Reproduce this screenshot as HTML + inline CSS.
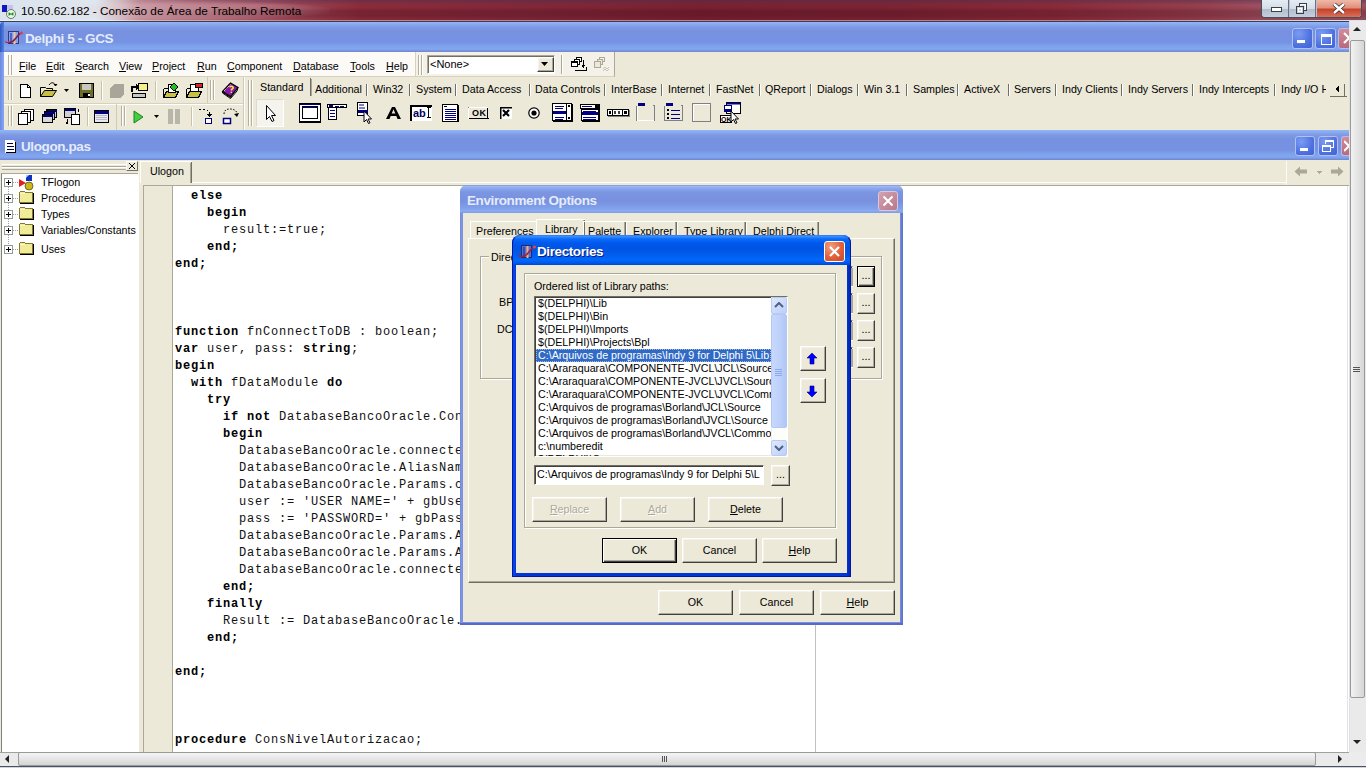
<!DOCTYPE html>
<html><head><meta charset="utf-8"><style>
*{margin:0;padding:0;box-sizing:border-box}
html,body{width:1366px;height:768px;overflow:hidden;background:#ece9d8;font-family:"Liberation Sans",sans-serif;font-size:10.7px;color:#000;position:relative}
.a{position:absolute}
.t{position:absolute;white-space:nowrap;line-height:13px}
.u{text-decoration:underline;text-underline-offset:1px}
.xpin{background:linear-gradient(180deg,#9bb3ef 0,#8aa4ea 2px,#7d97e1 5px,#7a94de 12px,#7f9ce3 20px,#8cabed 26px,#93b3f1 28px,#7b97dd 30px)}
.xpact{background:linear-gradient(180deg,#3c8cff 0,#0a5ef0 3px,#0058e6 8px,#0054e3 14px,#0060f0 22px,#0a66f8 25px,#0050d8 29px)}
.code{font-family:"Liberation Mono",monospace;font-size:12px;letter-spacing:0.8px;line-height:17px;white-space:pre;position:absolute;left:175px;color:#111}
.code b{font-weight:bold;color:#000}
.btn{background:#ece9d8;border:1px solid;border-color:#fff #404040 #404040 #fff;box-shadow:inset -1px -1px 0 #aca899,inset 1px 1px 0 #f4f2ea}
.btn.def{border:1px solid #000;box-shadow:inset 1px 1px 0 #fff,inset -1px -1px 0 #404040,inset -2px -2px 0 #aca899}
.bl{position:absolute;left:0;right:0;top:0;text-align:center;white-space:nowrap}
.sunk{background:#fff;border:1px solid;border-color:#aca899 #fff #fff #aca899;box-shadow:inset 1px 1px 0 #716f64,inset -1px -1px 0 #ece9d8}
.grp{border:1px solid #d0d0bf;box-shadow:inset 1px 1px 0 #fff,1px 1px 0 #fff}
.ttl{position:absolute;white-space:nowrap;font-weight:bold;font-size:13.5px;letter-spacing:-0.4px;line-height:17px}
.sep{position:absolute;width:2px;border-left:1px solid #aca899;border-right:1px solid #fff}
.grip{position:absolute;width:5px;border-left:1px solid #fff;border-right:1px solid #aca899;box-shadow:inset 1px 0 0 #aca899,inset -1px 0 0 #fff}
</style></head><body>
<div class="a " style="left:0px;top:0px;width:1366px;height:21px;background:linear-gradient(90deg,#dbe3ec 0,#dfe6ee 95px,#d8c4cb 118px,#c58e99 140px,#b7707e 190px,#aa5666 260px,#9a3f4f 310px,#8d2d3d 360px,#84293a 520px,#7a2232 700px,#7e2535 900px,#8a2b3b 1050px,#98404f 1200px,#a05060 1260px)"></div>
<div class="a " style="left:60px;top:1px;width:270px;height:19px;background:radial-gradient(ellipse at 50% 50%,rgba(235,205,210,.35) 0,rgba(230,200,205,.2) 55%,rgba(230,200,205,0) 75%)"></div>
<div class="a " style="left:100px;top:0px;width:1266px;height:20px;-webkit-mask-image:linear-gradient(90deg,transparent 0,#000 200px);mask-image:linear-gradient(90deg,transparent 0,#000 200px);background:linear-gradient(180deg,rgba(70,50,80,.45) 0,rgba(70,50,80,.3) 2px,rgba(120,30,50,0) 5px,rgba(40,0,10,.05) 8px,rgba(40,0,10,.22) 11px,rgba(40,0,10,.22) 16px,rgba(60,0,20,.1) 19px)"></div>
<div class="a " style="left:0px;top:20px;width:1366px;height:1px;background:linear-gradient(90deg,#e8f4fa 0,#e8f0f4 110px,#d8b0bc 150px,#c88090 300px,#c07888 1100px,#d0c0cc 1250px,#dde6f0 1366px)"></div>
<div class="a " style="left:0px;top:21px;width:1366px;height:1px;background:#3a4050"></div>
<svg class="a" style="left:0px;top:0px;shape-rendering:auto" width="20" height="20" viewBox="0 0 20 20" shape-rendering="crispEdges"><rect x="2" y="5" width="5" height="7" fill="#1018c0"/><rect x="7" y="5" width="6" height="4" fill="#c8c0f0"/><circle cx="11" cy="14" r="4.5" fill="#e8f8e0" stroke="#6a7a70" stroke-width="1"/><path d="M8.5 12.8 L10.3 14 L8.5 15.2 M13.5 12.8 L11.7 14 L13.5 15.2" stroke="#208a30" stroke-width="1.3" fill="none"/></svg>
<div class="t " style="left:21px;top:3px;font-size:11.75px;line-height:15px;color:#000">10.50.62.182 - Conexão de Área de Trabalho Remota</div>
<div class="a " style="left:1261px;top:0px;width:101px;height:18px;border:1px solid #4a4c58;border-top:none;border-radius:0 0 4px 4px;overflow:hidden;background:#b8c4d2"><div class="a" style="left:0;top:0;width:27px;height:17px;background:linear-gradient(180deg,#e6ecf3 0,#d4dde8 50%,#b0bccb 51%,#c4d0dc 100%);border-right:1px solid #6a7080"></div><div class="a" style="left:28px;top:0;width:26px;height:17px;background:linear-gradient(180deg,#e6ecf3 0,#d4dde8 50%,#b0bccb 51%,#c4d0dc 100%);border-right:1px solid #6a7080"></div><div class="a" style="left:55px;top:0;width:46px;height:17px;background:linear-gradient(180deg,#f0b8a8 0,#e0907c 45%,#c7432a 55%,#d8705a 100%)"></div></div>
<svg class="a" style="left:1270px;top:6px;" width="12" height="6" viewBox="0 0 12 6" shape-rendering="crispEdges"><rect x="1" y="1" width="10" height="4" fill="#fff" stroke="#3a3f4a"/></svg>
<svg class="a" style="left:1295px;top:2px;" width="12" height="12" viewBox="0 0 12 12" shape-rendering="crispEdges"><rect x="4" y="1" width="7" height="7" fill="none" stroke="#3a3f4a" stroke-width="1"/><rect x="5" y="2" width="5" height="5" fill="none" stroke="#fff"/><rect x="1" y="4" width="7" height="7" fill="#c8d2de" stroke="#3a3f4a"/><rect x="3" y="6" width="3" height="3" fill="none" stroke="#fff"/></svg>
<svg class="a" style="left:1332px;top:3px;shape-rendering:auto" width="14" height="11" viewBox="0 0 14 11" shape-rendering="crispEdges"><path d="M2 1 L12 10 M12 1 L2 10" stroke="#3a2a2a" stroke-width="4" fill="none"/><path d="M2 1 L12 10 M12 1 L2 10" stroke="#fff" stroke-width="2.4" fill="none"/></svg>
<div class="a " style="left:0px;top:22px;width:1349px;height:30px;background:linear-gradient(180deg,#92b6f8 0,#8aacf2 2px,#7f9ae2 5px,#7791e0 9px,#7692e2 20px,#7ea2ec 24px,#82a8f0 27px,#7890dc 29px,#6e84d4 30px)"></div>
<div class="a " style="left:0px;top:22px;width:4px;height:30px;background:linear-gradient(90deg,#2858c0,#5a80e0);border-radius:5px 0 0 0"></div>
<svg class="a" style="left:4px;top:28px;shape-rendering:auto" width="20" height="20" viewBox="0 0 20 20" shape-rendering="crispEdges"><rect x="4.5" y="3.5" width="10" height="12" fill="#8aa0e8" stroke="#303a80"/><path d="M7 5v9" stroke="#3050c0" stroke-width="1.5"/><path d="M10.5 4v12" stroke="#f0c8a0" stroke-width="2"/><path d="M1.5 13.5 C5 15.5 9 14 12 10 S16 5 18 4.5" stroke="#802040" stroke-width="1.6" fill="none"/><circle cx="17.5" cy="5" r="1.6" fill="#e04060"/><path d="M2 13 L4.5 14" stroke="#e070a0" stroke-width="1.2"/></svg>
<div class="t ttl" style="left:25px;top:30px;color:#e4ecfc">Delphi 5 - GCS</div>
<div class="a " style="left:1292px;top:28px;width:21px;height:21px;border:1px solid #b0c0f0;border-radius:3px;background:radial-gradient(circle at 30% 25%,#7a9cf4 0,#4f72e0 60%,#3f60d4 100%)"></div>
<div class="a " style="left:1315px;top:28px;width:21px;height:21px;border:1px solid #b0c0f0;border-radius:3px;background:radial-gradient(circle at 30% 25%,#7a9cf4 0,#4f72e0 60%,#3f60d4 100%)"></div>
<div class="a " style="left:1338px;top:28px;width:21px;height:21px;border:1px solid #b0bde8;border-radius:3px;background:linear-gradient(180deg,#d48a98,#b86a7c)"></div>
<svg class="a" style="left:1297px;top:40px;" width="10" height="4" viewBox="0 0 10 4" shape-rendering="crispEdges"><rect x="0" y="0" width="8" height="3" fill="#fff"/></svg>
<svg class="a" style="left:1319px;top:32px;" width="14" height="14" viewBox="0 0 14 14" shape-rendering="crispEdges"><rect x="2.5" y="2.5" width="10" height="10" fill="none" stroke="#fff" stroke-width="1.2"/><rect x="2" y="2" width="11" height="3" fill="#fff"/></svg>
<svg class="a" style="left:1342px;top:31px;shape-rendering:auto" width="8" height="15" viewBox="0 0 8 15" shape-rendering="crispEdges"><path d="M2 2 L12 12 M12 2 L2 12" stroke="#fff" stroke-width="2.2"/></svg>
<div class="a " style="left:0px;top:52px;width:4px;height:78px;background:linear-gradient(90deg,#6a88e0,#7898ec 2px,#88a8f0)"></div>
<div class="a " style="left:4px;top:52px;width:411px;height:25px;background:#fbfaf6;border-bottom:1px solid #d8d2bc"></div>
<div class="a " style="left:8px;top:55px;width:2px;height:20px;border-left:1px solid #b4b09c;border-right:1px solid #fff"></div>
<div class="a " style="left:11px;top:55px;width:2px;height:20px;border-left:1px solid #b4b09c;border-right:1px solid #fff"></div>
<div class="t " style="left:19px;top:60px;"><span class="u">F</span>ile</div>
<div class="t " style="left:46px;top:60px;"><span class="u">E</span>dit</div>
<div class="t " style="left:75px;top:60px;"><span class="u">S</span>earch</div>
<div class="t " style="left:119px;top:60px;"><span class="u">V</span>iew</div>
<div class="t " style="left:152px;top:60px;"><span class="u">P</span>roject</div>
<div class="t " style="left:197px;top:60px;"><span class="u">R</span>un</div>
<div class="t " style="left:227px;top:60px;"><span class="u">C</span>omponent</div>
<div class="t " style="left:293px;top:60px;"><span class="u">D</span>atabase</div>
<div class="t " style="left:350px;top:60px;"><span class="u">T</span>ools</div>
<div class="t " style="left:386px;top:60px;"><span class="u">H</span>elp</div>
<div class="a " style="left:415px;top:52px;width:200px;height:25px;background:#f3f1e8;border-left:1px solid #d8d2bc;border-bottom:1px solid #d8d2bc;border-right:1px solid #aca899"></div>
<div class="a " style="left:418px;top:55px;width:2px;height:20px;border-left:1px solid #b4b09c;border-right:1px solid #fff"></div>
<div class="a " style="left:421px;top:55px;width:2px;height:20px;border-left:1px solid #b4b09c;border-right:1px solid #fff"></div>
<div class="a " style="left:427px;top:55px;width:128px;height:19px;background:#fff;border:1px solid;border-color:#aca899 #fff #fff #aca899;box-shadow:inset 1px 1px 0 #716f64"></div>
<div class="t " style="left:430px;top:58px;font-size:11px">&lt;None&gt;</div>
<div class="a btn" style="left:537px;top:57px;width:17px;height:15px;"></div>
<svg class="a" style="left:541px;top:62px;shape-rendering:auto" width="9" height="5" viewBox="0 0 9 5" shape-rendering="crispEdges"><path d="M0 0h7l-3.5 4z" fill="#000"/></svg>
<div class="a " style="left:561px;top:55px;width:2px;height:19px;border-left:1px solid #aca899;border-right:1px solid #fff"></div>
<svg class="a" style="left:571px;top:57px;" width="16" height="16" viewBox="0 0 16 16" shape-rendering="crispEdges"><rect x="5.5" y="0.5" width="5" height="4" fill="#fff" stroke="#000"/><rect x="3.5" y="2.5" width="5" height="5" fill="#fff" stroke="#000"/><rect x="0.5" y="4.5" width="6" height="5" fill="#fff" stroke="#000"/><rect x="1" y="5" width="5" height="1" fill="#000"/><path d="M12.5 3v7M11 8l1.5 2 1.5-2" stroke="#000" fill="none"/><path d="M4 13.5h11.5V10" stroke="#000" stroke-width="1.2" fill="none"/></svg>
<svg class="a" style="left:594px;top:57px;" width="16" height="17" viewBox="0 0 16 17" shape-rendering="crispEdges"><rect x="5.5" y="0.5" width="5" height="4" fill="none" stroke="#aca899"/><rect x="3.5" y="2.5" width="5" height="5" fill="#ece9d8" stroke="#aca899"/><rect x="0.5" y="4.5" width="6" height="6" fill="#ece9d8" stroke="#aca899"/><path d="M9 12l2-2 2 2 2-2 M9 14l2-2 2 2 2-2" stroke="#c8c4b4" fill="none"/></svg>
<div class="a " style="left:615px;top:52px;width:734px;height:25px;background:#ece9d8"></div>
<div class="a " style="left:4px;top:77px;width:1345px;height:53px;background:#ece9d8"></div>
<div class="a " style="left:4px;top:103px;width:239px;height:1px;background:#d8d2bc"></div>
<div class="a " style="left:4px;top:104px;width:239px;height:1px;background:#fff"></div>
<div class="a " style="left:243px;top:77px;width:1px;height:53px;background:#d0cbb8"></div>
<div class="a " style="left:244px;top:77px;width:1px;height:53px;background:#fff"></div>
<div class="a " style="left:207px;top:77px;width:1px;height:26px;background:#d0cbb8"></div>
<div class="a " style="left:116px;top:103px;width:1px;height:27px;background:#d0cbb8"></div>
<div class="a " style="left:8px;top:80px;width:2px;height:20px;border-left:1px solid #b4b09c;border-right:1px solid #fff"></div>
<div class="a " style="left:11px;top:80px;width:2px;height:20px;border-left:1px solid #b4b09c;border-right:1px solid #fff"></div>
<div class="a " style="left:8px;top:106px;width:2px;height:20px;border-left:1px solid #b4b09c;border-right:1px solid #fff"></div>
<div class="a " style="left:11px;top:106px;width:2px;height:20px;border-left:1px solid #b4b09c;border-right:1px solid #fff"></div>
<div class="a " style="left:210px;top:80px;width:2px;height:20px;border-left:1px solid #b4b09c;border-right:1px solid #fff"></div>
<div class="a " style="left:213px;top:80px;width:2px;height:20px;border-left:1px solid #b4b09c;border-right:1px solid #fff"></div>
<div class="a " style="left:121px;top:106px;width:2px;height:20px;border-left:1px solid #b4b09c;border-right:1px solid #fff"></div>
<div class="a " style="left:124px;top:106px;width:2px;height:20px;border-left:1px solid #b4b09c;border-right:1px solid #fff"></div>
<div class="a " style="left:248px;top:80px;width:2px;height:46px;border-left:1px solid #b4b09c;border-right:1px solid #fff"></div>
<div class="a " style="left:251px;top:80px;width:2px;height:46px;border-left:1px solid #b4b09c;border-right:1px solid #fff"></div>
<div class="a " style="left:101px;top:81px;width:2px;height:19px;border-left:1px solid #c8c2ac;border-right:1px solid #fff"></div>
<div class="a " style="left:155px;top:81px;width:2px;height:19px;border-left:1px solid #c8c2ac;border-right:1px solid #fff"></div>
<div class="a " style="left:87px;top:107px;width:2px;height:19px;border-left:1px solid #c8c2ac;border-right:1px solid #fff"></div>
<div class="a " style="left:191px;top:107px;width:2px;height:19px;border-left:1px solid #c8c2ac;border-right:1px solid #fff"></div>
<svg class="a" style="left:19px;top:83px;" width="14" height="16" viewBox="0 0 14 16" shape-rendering="crispEdges"><path d="M1.5 1.5h7l3 3v10h-10z" fill="#fff" stroke="#000"/><path d="M8.5 1.5v3h3" fill="none" stroke="#000"/></svg>
<svg class="a" style="left:39px;top:82px;shape-rendering:auto" width="20" height="17" viewBox="0 0 20 17" shape-rendering="crispEdges"><path d="M1.5 5.5h5l1 1h6v2" fill="#f4f08a" stroke="#000"/><path d="M1.5 5.5v9h12l4-6h-12l-4 6" fill="#c8c040" stroke="#000"/><path d="M10 3 C12 0 15 0 16 3" fill="none" stroke="#000"/><path d="M15 2l1.5 2 1.5-2" fill="#000" stroke="#000"/></svg>
<svg class="a" style="left:64px;top:89px;shape-rendering:auto" width="7" height="4" viewBox="0 0 7 4" shape-rendering="crispEdges"><path d="M0 0h5l-2.5 3z" fill="#000"/></svg>
<svg class="a" style="left:79px;top:83px;" width="15" height="15" viewBox="0 0 15 15" shape-rendering="crispEdges"><rect x="0.5" y="0.5" width="14" height="14" fill="#6e6e2a" stroke="#000"/><rect x="3" y="1" width="9" height="6" fill="#c8c8c0"/><rect x="4" y="10" width="7" height="4" fill="#000"/><rect x="9" y="11" width="2" height="2" fill="#fff"/></svg>
<svg class="a" style="left:109px;top:83px;" width="17" height="15" viewBox="0 0 17 15" shape-rendering="crispEdges"><path d="M5 1h10v10l-4 4H1V5z" fill="#a8a69a"/></svg>
<svg class="a" style="left:131px;top:82px;" width="18" height="17" viewBox="0 0 18 17" shape-rendering="crispEdges"><rect x="7.5" y="1.5" width="9" height="7" fill="#f4f08a" stroke="#000"/><path d="M1 10 V5 H6" fill="none" stroke="#000" stroke-width="2"/><path d="M5 2l3 3-3 3z" fill="#000"/><rect x="1.5" y="11.5" width="13" height="4" fill="#c8c8c8" stroke="#000"/></svg>
<svg class="a" style="left:162px;top:82px;" width="18" height="17" viewBox="0 0 18 17" shape-rendering="crispEdges"><path d="M1.5 6.5h4l1 1h6v1" fill="#f4f08a" stroke="#000"/><path d="M1.5 6.5v9h12l3-6h-12l-3 6" fill="#c8c040" stroke="#000"/><rect x="6" y="2" width="7" height="8" fill="#fff" stroke="#000"/><path d="M12 1l4 4-4 4-4-4z" fill="#20c020" stroke="#000"/></svg>
<svg class="a" style="left:185px;top:82px;" width="18" height="17" viewBox="0 0 18 17" shape-rendering="crispEdges"><path d="M1.5 6.5h4l1 1h6v1" fill="#f4f08a" stroke="#000"/><path d="M1.5 6.5v9h12l3-6h-12l-3 6" fill="#c8c040" stroke="#000"/><rect x="5" y="2" width="8" height="7" fill="#fff" stroke="#000"/><rect x="10" y="1" width="7" height="4" fill="#e02020" stroke="#000"/></svg>
<svg class="a" style="left:221px;top:82px;shape-rendering:auto" width="18" height="17" viewBox="0 0 18 17" shape-rendering="crispEdges"><path d="M1.5 10 L9.5 15.5 L17 5.5 L16 9 L9.5 16.5 L1.5 11z" fill="#fff" stroke="#000" stroke-width="1"/><path d="M1.5 9.5 L9.5 1 L17 5.5 L9.5 14.5 Z" fill="#8a18a8" stroke="#000" stroke-width="1.1"/><path d="M3 9 L9.5 2.5" stroke="#fff" stroke-width="1" stroke-dasharray="1 1"/><path d="M8.5 5 Q10.5 3.5 12 5 Q12.5 6.5 10.5 7.5 V8.5" stroke="#f8e040" stroke-width="1.6" fill="none"/><rect x="9.6" y="9.6" width="1.4" height="1.4" fill="#f8e040"/></svg>
<svg class="a" style="left:17px;top:108px;" width="18" height="17" viewBox="0 0 18 17" shape-rendering="crispEdges"><rect x="7.5" y="1.5" width="9" height="11" fill="#fff" stroke="#000"/><rect x="4.5" y="3.5" width="9" height="11" fill="#fff" stroke="#000"/><rect x="1.5" y="5.5" width="9" height="11" fill="#fff" stroke="#000"/></svg>
<svg class="a" style="left:41px;top:108px;" width="16" height="16" viewBox="0 0 16 16" shape-rendering="crispEdges"><rect x="5.5" y="1.5" width="10" height="8" fill="#c8c8c8" stroke="#000"/><rect x="5.5" y="1.5" width="10" height="2" fill="#000080"/><rect x="3.5" y="3.5" width="10" height="8" fill="#c8c8c8" stroke="#000"/><rect x="3.5" y="3.5" width="10" height="2" fill="#000080"/><rect x="1.5" y="6.5" width="10" height="8" fill="#d8d8d8" stroke="#000"/><rect x="1.5" y="6.5" width="10" height="2" fill="#000080"/></svg>
<svg class="a" style="left:64px;top:108px;" width="17" height="17" viewBox="0 0 17 17" shape-rendering="crispEdges"><rect x="0.5" y="0.5" width="11" height="9" fill="#d0d0d0" stroke="#000"/><rect x="0.5" y="0.5" width="11" height="2" fill="#000080"/><rect x="7.5" y="6.5" width="8" height="10" fill="#fff" stroke="#000"/><path d="M3 11v4M2 14l1 2 1-2M14 1v3" stroke="#000" fill="none"/></svg>
<svg class="a" style="left:94px;top:110px;" width="16" height="14" viewBox="0 0 16 14" shape-rendering="crispEdges"><rect x="0.5" y="0.5" width="14" height="12" fill="#e8e8f0" stroke="#000"/><rect x="0.5" y="0.5" width="14" height="3" fill="#000080"/><path d="M2 5h11M2 7h11M2 9h11" stroke="#b8b8c8"/></svg>
<svg class="a" style="left:133px;top:110px;shape-rendering:auto" width="11" height="14" viewBox="0 0 11 14" shape-rendering="crispEdges"><path d="M1 1 L10 7 L1 13 Z" fill="#40d040" stroke="#208020"/></svg>
<svg class="a" style="left:154px;top:115px;shape-rendering:auto" width="6" height="4" viewBox="0 0 6 4" shape-rendering="crispEdges"><path d="M0 0h5l-2.5 3z" fill="#000"/></svg>
<svg class="a" style="left:168px;top:109px;" width="12" height="15" viewBox="0 0 12 15" shape-rendering="crispEdges"><rect x="0" y="0" width="5" height="15" fill="#b8b6aa"/><rect x="7" y="0" width="5" height="15" fill="#b8b6aa"/></svg>
<svg class="a" style="left:198px;top:108px;" width="14" height="17" viewBox="0 0 14 17" shape-rendering="crispEdges"><path d="M1 1h2M5 1h2M9 2l1 1M11 4v2" stroke="#000"/><path d="M9 6l2.5 3 2.5-3z" fill="#000"/><rect x="7.5" y="10.5" width="6" height="5" fill="#fff" stroke="#000080" stroke-width="1.5"/></svg>
<svg class="a" style="left:221px;top:108px;shape-rendering:auto" width="18" height="17" viewBox="0 0 18 17" shape-rendering="crispEdges"><path d="M3 6C3 2 6 1 9 1s6 1 7 4" fill="none" stroke="#000" stroke-dasharray="1.5 1.5"/><path d="M13 6l3 3 2-4z" fill="#000"/><rect x="2.5" y="10.5" width="7" height="5" fill="#fff" stroke="#000080" stroke-width="1.5"/></svg>
<div class="a " style="left:310px;top:78px;width:1px;height:18px;background:#716f64"></div>
<div class="a " style="left:311px;top:79px;width:1px;height:17px;background:#aca899"></div>
<div class="t " style="left:260px;top:81px;">Standard</div>
<div class="t " style="left:315px;top:83px;">Additional</div>
<div class="t " style="left:373px;top:83px;">Win32</div>
<div class="t " style="left:416px;top:83px;">System</div>
<div class="t " style="left:462px;top:83px;">Data Access</div>
<div class="t " style="left:535px;top:83px;">Data Controls</div>
<div class="t " style="left:611px;top:83px;">InterBase</div>
<div class="t " style="left:668px;top:83px;">Internet</div>
<div class="t " style="left:716px;top:83px;">FastNet</div>
<div class="t " style="left:765px;top:83px;">QReport</div>
<div class="t " style="left:817px;top:83px;">Dialogs</div>
<div class="t " style="left:864px;top:83px;">Win 3.1</div>
<div class="t " style="left:913px;top:83px;">Samples</div>
<div class="t " style="left:964px;top:83px;">ActiveX</div>
<div class="t " style="left:1014px;top:83px;">Servers</div>
<div class="t " style="left:1062px;top:83px;">Indy Clients</div>
<div class="t " style="left:1128px;top:83px;">Indy Servers</div>
<div class="t " style="left:1199px;top:83px;">Indy Intercepts</div>
<div class="t " style="left:1281px;top:83px;">Indy I/O H</div>
<div class="a " style="left:366px;top:84px;width:1px;height:12px;background:#716f64"></div>
<div class="a " style="left:367px;top:84px;width:1px;height:12px;background:#fff"></div>
<div class="a " style="left:409px;top:84px;width:1px;height:12px;background:#716f64"></div>
<div class="a " style="left:410px;top:84px;width:1px;height:12px;background:#fff"></div>
<div class="a " style="left:455px;top:84px;width:1px;height:12px;background:#716f64"></div>
<div class="a " style="left:456px;top:84px;width:1px;height:12px;background:#fff"></div>
<div class="a " style="left:529px;top:84px;width:1px;height:12px;background:#716f64"></div>
<div class="a " style="left:530px;top:84px;width:1px;height:12px;background:#fff"></div>
<div class="a " style="left:604px;top:84px;width:1px;height:12px;background:#716f64"></div>
<div class="a " style="left:605px;top:84px;width:1px;height:12px;background:#fff"></div>
<div class="a " style="left:661px;top:84px;width:1px;height:12px;background:#716f64"></div>
<div class="a " style="left:662px;top:84px;width:1px;height:12px;background:#fff"></div>
<div class="a " style="left:709px;top:84px;width:1px;height:12px;background:#716f64"></div>
<div class="a " style="left:710px;top:84px;width:1px;height:12px;background:#fff"></div>
<div class="a " style="left:759px;top:84px;width:1px;height:12px;background:#716f64"></div>
<div class="a " style="left:760px;top:84px;width:1px;height:12px;background:#fff"></div>
<div class="a " style="left:810px;top:84px;width:1px;height:12px;background:#716f64"></div>
<div class="a " style="left:811px;top:84px;width:1px;height:12px;background:#fff"></div>
<div class="a " style="left:857px;top:84px;width:1px;height:12px;background:#716f64"></div>
<div class="a " style="left:858px;top:84px;width:1px;height:12px;background:#fff"></div>
<div class="a " style="left:906px;top:84px;width:1px;height:12px;background:#716f64"></div>
<div class="a " style="left:907px;top:84px;width:1px;height:12px;background:#fff"></div>
<div class="a " style="left:957px;top:84px;width:1px;height:12px;background:#716f64"></div>
<div class="a " style="left:958px;top:84px;width:1px;height:12px;background:#fff"></div>
<div class="a " style="left:1008px;top:84px;width:1px;height:12px;background:#716f64"></div>
<div class="a " style="left:1009px;top:84px;width:1px;height:12px;background:#fff"></div>
<div class="a " style="left:1055px;top:84px;width:1px;height:12px;background:#716f64"></div>
<div class="a " style="left:1056px;top:84px;width:1px;height:12px;background:#fff"></div>
<div class="a " style="left:1121px;top:84px;width:1px;height:12px;background:#716f64"></div>
<div class="a " style="left:1122px;top:84px;width:1px;height:12px;background:#fff"></div>
<div class="a " style="left:1192px;top:84px;width:1px;height:12px;background:#716f64"></div>
<div class="a " style="left:1193px;top:84px;width:1px;height:12px;background:#fff"></div>
<div class="a " style="left:1274px;top:84px;width:1px;height:12px;background:#716f64"></div>
<div class="a " style="left:1275px;top:84px;width:1px;height:12px;background:#fff"></div>
<div class="a " style="left:1326px;top:81px;width:23px;height:15px;background:#ece9d8"></div>
<svg class="a" style="left:1330px;top:84px;" width="18" height="13" viewBox="0 0 18 13" shape-rendering="crispEdges"><path d="M5 5 L9 1 V9 Z" fill="#000"/><path d="M14 0v12M0 12h17" stroke="#716f64"/></svg>
<div class="a " style="left:256px;top:99px;width:28px;height:28px;background:#f4f3ee;border:1px solid;border-color:#dedbcc #fff #fff #dedbcc"></div>
<svg class="a" style="left:263px;top:104px;shape-rendering:auto" width="16" height="20" viewBox="0 0 16 20" shape-rendering="crispEdges"><path d="M3.5 1.5 V15.5 L6.5 12.5 L9 17.5 L11 16.5 L8.5 11.5 H12.5 Z" fill="#fff" stroke="#000"/></svg>
<svg class="a" style="left:299px;top:103px;" width="23" height="20" viewBox="0 0 23 20" shape-rendering="crispEdges"><rect x="0.5" y="0.5" width="21" height="18" fill="#fff" stroke="#000"/><rect x="1" y="1" width="20" height="1" fill="#000080"/><rect x="3.5" y="3.5" width="15" height="12" fill="#fff" stroke="#000"/><rect x="4" y="4" width="14" height="1" fill="#000080"/><path d="M0 19.5h22M21.5 0v20" stroke="#000"/></svg>
<svg class="a" style="left:327px;top:104px;" width="21" height="17" viewBox="0 0 21 17" shape-rendering="crispEdges"><rect x="0.5" y="0.5" width="19" height="3" fill="#fff" stroke="#000"/><rect x="2" y="1" width="4" height="2" fill="#000080"/><rect x="8" y="1.5" width="4" height="1" fill="#000080"/><rect x="13" y="1.5" width="4" height="1" fill="#000080"/><rect x="1.5" y="3.5" width="8" height="12" fill="#fff" stroke="#000"/><path d="M3 6h5M3 9h5M3 12h5" stroke="#000080"/></svg>
<svg class="a" style="left:357px;top:102px;shape-rendering:auto" width="18" height="22" viewBox="0 0 18 22" shape-rendering="crispEdges"><rect x="0.5" y="0.5" width="10" height="13" fill="#fff" stroke="#000"/><path d="M2 3h5M2 6h6" stroke="#000080"/><rect x="1" y="8" width="10" height="3" fill="#000080"/><path d="M7 9 V20 L9.5 17.5 L11.5 21.5 L13 20.8 L11 17 H14.5 Z" fill="#fff" stroke="#000"/></svg>
<svg class="a" style="left:385px;top:106px;shape-rendering:auto" width="17" height="14" viewBox="0 0 17 14" shape-rendering="crispEdges"><path d="M1 13 L7 1 H10 L16 13 H12.5 L11.3 10 H5.7 L4.5 13 Z M6.7 7.5 H10.3 L8.5 3.3 Z" fill="#000" fill-rule="evenodd"/></svg>
<div class="a" style="left:410px;top:105px;width:22px;height:16px;background:#fff;border-left:2px solid #000;border-top:2px solid #000"></div>
<div class="t " style="left:413px;top:106px;font-weight:bold;font-size:11px;color:#000060;line-height:14px">ab</div>
<svg class="a" style="left:426px;top:107px;" width="5" height="12" viewBox="0 0 5 12" shape-rendering="crispEdges"><path d="M0.5 0.5h4M2.5 0.5v10M0.5 10.5h4" stroke="#000"/></svg>
<svg class="a" style="left:442px;top:104px;" width="17" height="18" viewBox="0 0 17 18" shape-rendering="crispEdges"><rect x="0.5" y="0.5" width="15" height="17" fill="#fff" stroke="#000"/><path d="M2 2h3" stroke="#000"/><path d="M3 5h11M3 7h11M3 9h11M3 11h11M3 13h11M3 15h11" stroke="#000080"/><path d="M16.5 1v17M1 17.5h16" stroke="#000"/></svg>
<svg class="a" style="left:468px;top:107px;" width="21" height="13" viewBox="0 0 21 13" shape-rendering="crispEdges"><rect x="0.5" y="0.5" width="19" height="11" fill="#ece9d8" stroke="#808080"/><path d="M0.5 11.5h20M19.5 0v12" stroke="#000"/><path d="M0.5 0.5h19M0.5 0.5v11" stroke="#fff"/></svg>
<div class="t " style="left:472px;top:107px;font-weight:bold;font-size:9px;line-height:12px;letter-spacing:0.5px">OK</div>
<svg class="a" style="left:500px;top:107px;shape-rendering:auto" width="12" height="13" viewBox="0 0 12 13" shape-rendering="crispEdges"><rect x="0" y="0" width="12" height="12" fill="#fff"/><path d="M0.5 0v12M0 0.5h12" stroke="#000" stroke-width="2"/><path d="M3 3 L9 9 M9 3 L3 9" stroke="#000" stroke-width="2.2"/></svg>
<svg class="a" style="left:528px;top:107px;shape-rendering:auto" width="12" height="12" viewBox="0 0 12 12" shape-rendering="crispEdges"><circle cx="6" cy="6" r="5.2" fill="#fff" stroke="#000" stroke-width="1.2"/><circle cx="6" cy="6" r="2.6" fill="#000"/></svg>
<svg class="a" style="left:552px;top:103px;" width="21" height="19" viewBox="0 0 21 19" shape-rendering="crispEdges"><rect x="0.5" y="0.5" width="19" height="17" fill="#fff" stroke="#000"/><rect x="14.5" y="0.5" width="5" height="17" fill="#fff" stroke="#000"/><rect x="16" y="2" width="2" height="2" fill="#000"/><rect x="16" y="14" width="2" height="2" fill="#000"/><path d="M3 3h9M3 5h8" stroke="#000080"/><rect x="1" y="8" width="13" height="3" fill="#000080"/><path d="M3 14h9M3 16h8" stroke="#000080"/><path d="M20.5 1v18M1 18.5h20" stroke="#000"/></svg>
<svg class="a" style="left:580px;top:104px;" width="21" height="18" viewBox="0 0 21 18" shape-rendering="crispEdges"><rect x="0.5" y="0.5" width="19" height="4" fill="#fff" stroke="#000"/><rect x="15" y="1" width="4" height="3" fill="#000"/><path d="M2 2.5h10" stroke="#000080"/><rect x="1.5" y="5.5" width="17" height="11" fill="#fff" stroke="#000"/><rect x="2" y="8" width="16" height="3" fill="#000080"/><path d="M3 7h13M3 13h13M3 15h13" stroke="#000080"/><path d="M19.5 5v13M2 17.5h18" stroke="#000"/></svg>
<svg class="a" style="left:607px;top:109px;" width="23" height="8" viewBox="0 0 23 8" shape-rendering="crispEdges"><rect x="0.5" y="0.5" width="21" height="6" fill="#fff" stroke="#000"/><path d="M5.5 0v7M15.5 0v7" stroke="#000"/><rect x="2" y="2" width="2" height="3" fill="#000"/><rect x="7" y="2" width="2" height="3" fill="#404040"/><rect x="11" y="2" width="2" height="3" fill="#404040"/><rect x="17" y="2" width="3" height="3" fill="#000"/><path d="M0.5 7.5h22M22.5 1v7" stroke="#808080"/></svg>
<svg class="a" style="left:636px;top:103px;" width="20" height="19" viewBox="0 0 20 19" shape-rendering="crispEdges"><path d="M0.5 2.5v15h18v-15h-2" fill="none" stroke="#808080"/><path d="M1.5 3.5v13M1 17.5h17" stroke="#fff"/><rect x="2" y="0" width="7" height="3" fill="#000080"/></svg>
<svg class="a" style="left:664px;top:103px;" width="20" height="19" viewBox="0 0 20 19" shape-rendering="crispEdges"><path d="M0.5 2.5v15h18v-15h-2" fill="none" stroke="#808080"/><rect x="2" y="0" width="7" height="3" fill="#000080"/><rect x="3" y="6" width="2" height="2" fill="#000"/><rect x="3" y="10" width="2" height="2" fill="#000"/><rect x="3" y="14" width="2" height="2" fill="#000"/><path d="M7 7h9M7 11h9M7 15h9" stroke="#000080"/></svg>
<svg class="a" style="left:692px;top:103px;" width="20" height="20" viewBox="0 0 20 20" shape-rendering="crispEdges"><rect x="0.5" y="0.5" width="18" height="18" fill="none" stroke="#808080"/><path d="M1.5 1.5h16M1.5 1.5v16" stroke="#fff"/></svg>
<svg class="a" style="left:720px;top:102px;shape-rendering:auto" width="22" height="23" viewBox="0 0 22 23" shape-rendering="crispEdges"><rect x="6.5" y="0.5" width="14" height="11" fill="#fff" stroke="#000"/><rect x="6.5" y="0.5" width="14" height="2" fill="#000080"/><rect x="4.5" y="3.5" width="7" height="6" fill="#fff" stroke="#000080"/><rect x="5" y="7" width="6" height="2" fill="#000080"/><rect x="0.5" y="13.5" width="11" height="7" fill="#fff" stroke="#000"/><text x="1" y="20" font-size="7" font-weight="bold" font-family="Liberation Sans">OK</text><path d="M11 9 V20 L13.5 17.5 L15.5 21.5 L17 20.8 L15 17 H18.5 Z" fill="#fff" stroke="#000"/></svg>
<div class="a " style="left:0px;top:130px;width:1349px;height:30px;background:linear-gradient(180deg,#92b6f8 0,#8aacf2 2px,#7f9ae2 5px,#7791e0 9px,#7692e2 20px,#7ea2ec 24px,#82a8f0 27px,#7890dc 29px,#6e84d4 30px)"></div>
<svg class="a" style="left:5px;top:140px;" width="11" height="14" viewBox="0 0 11 14" shape-rendering="crispEdges"><path d="M0.5 0.5h8l2 2v10h-10z" fill="#fff" stroke="#fff"/><path d="M1 12.5h10M10.5 2v11" stroke="#000"/><path d="M2 3h6M2 6h7M2 9h7" stroke="#000050" stroke-width="1"/></svg>
<div class="t ttl" style="left:21px;top:138px;color:#e4ecfc">Ulogon.pas</div>
<div class="a " style="left:1295px;top:136px;width:20px;height:20px;border:1px solid #b0c0f0;border-radius:3px;background:radial-gradient(circle at 30% 25%,#7a9cf4 0,#4f72e0 60%,#3f60d4 100%)"></div>
<div class="a " style="left:1318px;top:136px;width:20px;height:20px;border:1px solid #b0c0f0;border-radius:3px;background:radial-gradient(circle at 30% 25%,#7a9cf4 0,#4f72e0 60%,#3f60d4 100%)"></div>
<div class="a " style="left:1341px;top:136px;width:8px;height:20px;border:1px solid #b0bde8;border-right:none;border-radius:3px 0 0 3px;background:linear-gradient(180deg,#d48a98,#b86a7c)"></div>
<svg class="a" style="left:1300px;top:148px;" width="9" height="4" viewBox="0 0 9 4" shape-rendering="crispEdges"><rect x="0" y="0" width="8" height="3" fill="#fff"/></svg>
<svg class="a" style="left:1322px;top:140px;" width="12" height="12" viewBox="0 0 12 12" shape-rendering="crispEdges"><path d="M3.5 3.5v-3h8v7h-3" fill="none" stroke="#fff"/><rect x="3" y="0" width="9" height="2" fill="#fff"/><rect x="0.5" y="5.5" width="8" height="6" fill="none" stroke="#fff"/><rect x="0" y="5" width="9" height="2" fill="#fff"/></svg>
<svg class="a" style="left:1344px;top:140px;shape-rendering:auto" width="6" height="12" viewBox="0 0 6 12" shape-rendering="crispEdges"><path d="M0 1 L10 11 M10 1 L0 11" stroke="#fff" stroke-width="2"/></svg>
<div class="a " style="left:0px;top:160px;width:1349px;height:592px;background:#ece9d8"></div>
<div class="a " style="left:2px;top:164px;width:124px;height:3px;border-top:1px solid #fff;border-bottom:1px solid #aca899"></div>
<div class="a " style="left:2px;top:167px;width:124px;height:3px;border-top:1px solid #fff;border-bottom:1px solid #aca899"></div>
<div class="a " style="left:126px;top:161px;width:12px;height:10px;border:1px solid;border-color:#fff #716f64 #716f64 #fff"></div>
<svg class="a" style="left:128px;top:162px;shape-rendering:auto" width="9" height="8" viewBox="0 0 9 8" shape-rendering="crispEdges"><path d="M1 1 L7 7 M7 1 L1 7" stroke="#000" stroke-width="1"/></svg>
<div class="a " style="left:1px;top:173px;width:138px;height:579px;background:#fff;border-left:1px solid #808080;border-top:1px solid #aca899"></div>
<div class="a " style="left:138px;top:172px;width:1px;height:580px;background:#fff"></div>
<div class="a " style="left:8px;top:187px;width:1px;height:63px;border-left:1px dotted #a0a0a0"></div>
<div class="a " style="left:13px;top:182px;width:5px;height:1px;border-top:1px dotted #a0a0a0"></div>
<div class="a " style="left:13px;top:198px;width:5px;height:1px;border-top:1px dotted #a0a0a0"></div>
<div class="a " style="left:13px;top:214px;width:5px;height:1px;border-top:1px dotted #a0a0a0"></div>
<div class="a " style="left:13px;top:230px;width:5px;height:1px;border-top:1px dotted #a0a0a0"></div>
<div class="a " style="left:13px;top:249px;width:5px;height:1px;border-top:1px dotted #a0a0a0"></div>
<div class="a " style="left:4px;top:178px;width:9px;height:9px;background:#fff;border:1px solid #919b9c"></div>
<svg class="a" style="left:5px;top:179px;" width="7" height="7" viewBox="0 0 7 7" shape-rendering="crispEdges"><path d="M1 3.5h5M3.5 1v5" stroke="#000"/></svg>
<div class="a " style="left:4px;top:194px;width:9px;height:9px;background:#fff;border:1px solid #919b9c"></div>
<svg class="a" style="left:5px;top:195px;" width="7" height="7" viewBox="0 0 7 7" shape-rendering="crispEdges"><path d="M1 3.5h5M3.5 1v5" stroke="#000"/></svg>
<div class="a " style="left:4px;top:210px;width:9px;height:9px;background:#fff;border:1px solid #919b9c"></div>
<svg class="a" style="left:5px;top:211px;" width="7" height="7" viewBox="0 0 7 7" shape-rendering="crispEdges"><path d="M1 3.5h5M3.5 1v5" stroke="#000"/></svg>
<div class="a " style="left:4px;top:226px;width:9px;height:9px;background:#fff;border:1px solid #919b9c"></div>
<svg class="a" style="left:5px;top:227px;" width="7" height="7" viewBox="0 0 7 7" shape-rendering="crispEdges"><path d="M1 3.5h5M3.5 1v5" stroke="#000"/></svg>
<div class="a " style="left:4px;top:245px;width:9px;height:9px;background:#fff;border:1px solid #919b9c"></div>
<svg class="a" style="left:5px;top:246px;" width="7" height="7" viewBox="0 0 7 7" shape-rendering="crispEdges"><path d="M1 3.5h5M3.5 1v5" stroke="#000"/></svg>
<svg class="a" style="left:18px;top:174px;shape-rendering:auto" width="16" height="18" viewBox="0 0 16 18" shape-rendering="crispEdges"><path d="M1 5 L8 9 L1 13 Z" fill="#e02020"/><rect x="8" y="1" width="6" height="6" fill="#1030c0"/><path d="M8 1 L11 1 L8 4z" fill="#80e0ff"/><circle cx="11" cy="12" r="4" fill="#c8b818" stroke="#605010" stroke-width="0.8"/></svg>
<svg class="a" style="left:18px;top:190px;" width="17" height="14" viewBox="0 0 17 14" shape-rendering="crispEdges"><path d="M1.5 2.5 L2.5 1.5 H6.5 L7.5 2.5 H14.5 V12.5 H1.5 Z" fill="#f0ec98" stroke="#807830"/><path d="M2 13.5h14M15.5 3v11" stroke="#000"/><path d="M2 3.5h5" stroke="#fff8c0"/></svg>
<svg class="a" style="left:18px;top:206px;" width="17" height="14" viewBox="0 0 17 14" shape-rendering="crispEdges"><path d="M1.5 2.5 L2.5 1.5 H6.5 L7.5 2.5 H14.5 V12.5 H1.5 Z" fill="#f0ec98" stroke="#807830"/><path d="M2 13.5h14M15.5 3v11" stroke="#000"/><path d="M2 3.5h5" stroke="#fff8c0"/></svg>
<svg class="a" style="left:18px;top:222px;" width="17" height="14" viewBox="0 0 17 14" shape-rendering="crispEdges"><path d="M1.5 2.5 L2.5 1.5 H6.5 L7.5 2.5 H14.5 V12.5 H1.5 Z" fill="#f0ec98" stroke="#807830"/><path d="M2 13.5h14M15.5 3v11" stroke="#000"/><path d="M2 3.5h5" stroke="#fff8c0"/></svg>
<svg class="a" style="left:18px;top:241px;" width="17" height="14" viewBox="0 0 17 14" shape-rendering="crispEdges"><path d="M1.5 2.5 L2.5 1.5 H6.5 L7.5 2.5 H14.5 V12.5 H1.5 Z" fill="#f0ec98" stroke="#807830"/><path d="M2 13.5h14M15.5 3v11" stroke="#000"/><path d="M2 3.5h5" stroke="#fff8c0"/></svg>
<div class="t " style="left:41px;top:176px;">TFlogon</div>
<div class="t " style="left:41px;top:192px;">Procedures</div>
<div class="t " style="left:41px;top:208px;">Types</div>
<div class="t " style="left:41px;top:224px;">Variables/Constants</div>
<div class="t " style="left:41px;top:243px;">Uses</div>
<div class="a " style="left:139px;top:161px;width:4px;height:591px;background:#ece9d8"></div>
<div class="a " style="left:140px;top:161px;width:52px;height:22px;border-left:1px solid #fff;border-top:1px solid #fff;background:#ece9d8"></div>
<div class="a " style="left:191px;top:162px;width:1px;height:21px;background:#716f64"></div>
<div class="a " style="left:190px;top:163px;width:1px;height:20px;background:#aca899"></div>
<div class="t " style="left:150px;top:165px;">Ulogon</div>
<div class="a " style="left:192px;top:182px;width:1094px;height:1px;background:#fff"></div>
<div class="a " style="left:1286px;top:161px;width:1px;height:24px;background:#fbfaf5"></div>
<svg class="a" style="left:1294px;top:166px;shape-rendering:auto" width="14" height="12" viewBox="0 0 14 12" shape-rendering="crispEdges"><path d="M6 0.5 L0.5 5.5 L6 10.5 V7.5 H13 V3.5 H6 Z" fill="#aca899"/></svg>
<svg class="a" style="left:1316px;top:171px;" width="7" height="4" viewBox="0 0 7 4" shape-rendering="crispEdges"><path d="M0 0h6l-3 3z" fill="#aca899"/></svg>
<svg class="a" style="left:1330px;top:166px;shape-rendering:auto" width="14" height="12" viewBox="0 0 14 12" shape-rendering="crispEdges"><path d="M8 0.5 L13.5 5.5 L8 10.5 V7.5 H1 V3.5 H8 Z" fill="#aca899"/></svg>
<div class="a " style="left:143px;top:185px;width:1206px;height:567px;background:#fff;border-top:1px solid #aca899;border-left:1px solid #aca899"></div>
<div class="a " style="left:144px;top:186px;width:29px;height:566px;background:#ece9d8;border-right:1px solid #aca899"></div>
<div class="a " style="left:815px;top:186px;width:1px;height:566px;background:#c0c0c0"></div>
<div class="a " style="left:1347px;top:186px;width:1px;height:566px;background:#dde4f0"></div>
<div class="code" style="top:188px"><b>  else</b>
<b>    begin</b>
      result:=true;
<b>    end;</b>
<b>end;</b>



<b>function</b> fnConnectToDB : boolean;
<b>var</b> user, pass: <b>string</b>;
<b>begin</b>
  <b>with</b> fDataModule <b>do</b>
    <b>try</b>
      <b>if not</b> DatabaseBancoOracle.Connected then
      <b>begin</b>
        DatabaseBancoOracle.connected := false;
        DatabaseBancoOracle.AliasName := 'GCS';
        DatabaseBancoOracle.Params.clear;
        user := 'USER NAME=' + gbUser;
        pass := 'PASSWORD=' + gbPass;
        DatabaseBancoOracle.Params.Add(user);
        DatabaseBancoOracle.Params.Add(pass);
        DatabaseBancoOracle.connected := true;
      <b>end;</b>
    <b>finally</b>
      Result := DatabaseBancoOracle.Connected
    <b>end;</b>

<b>end;</b>



<b>procedure</b> ConsNivelAutorizacao;</div>
<div class="a " style="left:1349px;top:21px;width:17px;height:731px;background:#eaeaea;border-left:1px solid #e0e0e0"></div>
<div class="a " style="left:1350px;top:40px;width:15px;height:658px;border:1px solid #9a9a9a;border-radius:2px;background:linear-gradient(90deg,#f2f2f2,#e4e4e4 50%,#d6d6d6)"></div>
<svg class="a" style="left:1352px;top:366px;" width="10" height="8" viewBox="0 0 10 8" shape-rendering="crispEdges"><path d="M1 1.5h7M1 3.5h7M1 5.5h7" stroke="#555"/></svg>
<svg class="a" style="left:1353px;top:27px;shape-rendering:auto" width="9" height="5" viewBox="0 0 9 5" shape-rendering="crispEdges"><path d="M0 4 L4 0 L8 4z" fill="#222"/></svg>
<svg class="a" style="left:1353px;top:740px;shape-rendering:auto" width="9" height="5" viewBox="0 0 9 5" shape-rendering="crispEdges"><path d="M0 0 L8 0 L4 4z" fill="#222"/></svg>
<div class="a " style="left:0px;top:752px;width:1349px;height:14px;background:#eaeaea;border-top:1px solid #a0a0a0"></div>
<div class="a " style="left:18px;top:752px;width:1298px;height:14px;border:1px solid #9a9a9a;border-radius:2px;background:linear-gradient(180deg,#f4f4f4,#e6e6e6 50%,#d4d4d4)"></div>
<svg class="a" style="left:661px;top:755px;" width="9" height="8" viewBox="0 0 9 8" shape-rendering="crispEdges"><path d="M1.5 1v6M3.5 1v6M5.5 1v6" stroke="#555"/></svg>
<svg class="a" style="left:5px;top:755px;shape-rendering:auto" width="5" height="9" viewBox="0 0 5 9" shape-rendering="crispEdges"><path d="M4 0 L0 4 L4 8z" fill="#222"/></svg>
<svg class="a" style="left:1338px;top:755px;shape-rendering:auto" width="5" height="9" viewBox="0 0 5 9" shape-rendering="crispEdges"><path d="M0 0 L4 4 L0 8z" fill="#222"/></svg>
<div class="a " style="left:1349px;top:752px;width:17px;height:14px;background:#ececec"></div>
<div class="a " style="left:0px;top:766px;width:1366px;height:1px;background:#4a5262"></div>
<div class="a " style="left:0px;top:767px;width:1366px;height:1px;background:#d0d4dc"></div>
<div class="a " style="left:460px;top:185px;width:443px;height:440px;background:linear-gradient(90deg,#6a7ed4 0,#8098e4 1px,#7890e0 3px,#7890e0 440px,#6274cc 442px);border-radius:7px 7px 0 0;border-bottom:2px solid #5a68c8"></div>
<div class="a " style="left:460px;top:185px;width:443px;height:28px;border-radius:7px 7px 0 0;background:linear-gradient(180deg,#7084d4 0,#a4bcf4 1px,#8eaaf0 3px,#7c96e2 7px,#7890de 16px,#80a0ea 23px,#8aacf2 26px,#7e9ae4 28px)"></div>
<div class="t ttl" style="left:467px;top:192px;color:#e4ecfc">Environment Options</div>
<div class="a " style="left:878px;top:191px;width:20px;height:20px;border:1px solid #dcc8d8;border-radius:3px;background:linear-gradient(135deg,#d2a2b0,#b8788c)"></div>
<svg class="a" style="left:882px;top:195px;shape-rendering:auto" width="12" height="12" viewBox="0 0 12 12" shape-rendering="crispEdges"><path d="M1.5 1.5 L10.5 10.5 M10.5 1.5 L1.5 10.5" stroke="#fff" stroke-width="2"/></svg>
<div class="a " style="left:463px;top:213px;width:437px;height:409px;background:#ece9d8"></div>
<div class="a " style="left:468px;top:238px;width:427px;height:345px;border:1px solid;border-color:#fff #716f64 #716f64 #fff;box-shadow:inset -1px -1px 0 #aca899"></div>
<div class="a " style="left:470px;top:221px;width:68px;height:18px;border-left:1px solid #fff;border-top:1px solid #fff"></div>
<div class="a " style="left:537px;top:222px;width:1px;height:17px;background:#716f64"></div>
<div class="a " style="left:536px;top:222px;width:1px;height:17px;background:#aca899"></div>
<div class="t " style="left:476px;top:225px;">Preferences</div>
<div class="a " style="left:536px;top:219px;width:49px;height:21px;background:#ece9d8;border-left:1px solid #fff;border-top:1px solid #fff"></div>
<div class="a " style="left:584px;top:220px;width:1px;height:20px;background:#716f64"></div>
<div class="a " style="left:583px;top:220px;width:1px;height:20px;background:#aca899"></div>
<div class="t " style="left:545px;top:223px;">Library</div>
<div class="a " style="left:583px;top:221px;width:43px;height:18px;border-left:1px solid #fff;border-top:1px solid #fff"></div>
<div class="a " style="left:625px;top:222px;width:1px;height:17px;background:#716f64"></div>
<div class="a " style="left:624px;top:222px;width:1px;height:17px;background:#aca899"></div>
<div class="t " style="left:588px;top:225px;">Palette</div>
<div class="a " style="left:626px;top:221px;width:51px;height:18px;border-left:1px solid #fff;border-top:1px solid #fff"></div>
<div class="a " style="left:676px;top:222px;width:1px;height:17px;background:#716f64"></div>
<div class="a " style="left:675px;top:222px;width:1px;height:17px;background:#aca899"></div>
<div class="t " style="left:633px;top:225px;">Explorer</div>
<div class="a " style="left:677px;top:221px;width:69px;height:18px;border-left:1px solid #fff;border-top:1px solid #fff"></div>
<div class="a " style="left:745px;top:222px;width:1px;height:17px;background:#716f64"></div>
<div class="a " style="left:744px;top:222px;width:1px;height:17px;background:#aca899"></div>
<div class="t " style="left:684px;top:225px;">Type Library</div>
<div class="a " style="left:746px;top:221px;width:73px;height:18px;border-left:1px solid #fff;border-top:1px solid #fff"></div>
<div class="a " style="left:818px;top:222px;width:1px;height:17px;background:#716f64"></div>
<div class="a " style="left:817px;top:222px;width:1px;height:17px;background:#aca899"></div>
<div class="t " style="left:753px;top:225px;">Delphi Direct</div>
<div class="a " style="left:480px;top:256px;width:402px;height:123px;border:1px solid #aca899;box-shadow:inset 1px 1px 0 #fff,1px 1px 0 #fff"></div>
<div class="a " style="left:489px;top:250px;width:42px;height:12px;background:#ece9d8"></div>
<div class="t " style="left:491px;top:251px;">Directories</div>
<div class="t " style="left:499px;top:296px;">BPL output directory:</div>
<div class="t " style="left:497px;top:323px;">DCP output directory:</div>
<div class="a " style="left:780px;top:266px;width:73px;height:21px;background:#fff;border:1px solid;border-color:#716f64 #fff #fff #716f64;box-shadow:inset 1px 1px 0 #404040"></div>
<div class="a " style="left:851px;top:268px;width:2px;height:18px;background:#aca899"></div>
<div class="a " style="left:780px;top:293px;width:73px;height:21px;background:#fff;border:1px solid;border-color:#716f64 #fff #fff #716f64;box-shadow:inset 1px 1px 0 #404040"></div>
<div class="a " style="left:851px;top:295px;width:2px;height:18px;background:#aca899"></div>
<div class="a " style="left:780px;top:320px;width:73px;height:21px;background:#fff;border:1px solid;border-color:#716f64 #fff #fff #716f64;box-shadow:inset 1px 1px 0 #404040"></div>
<div class="a " style="left:851px;top:322px;width:2px;height:18px;background:#aca899"></div>
<div class="a " style="left:780px;top:347px;width:73px;height:21px;background:#fff;border:1px solid;border-color:#716f64 #fff #fff #716f64;box-shadow:inset 1px 1px 0 #404040"></div>
<div class="a " style="left:851px;top:349px;width:2px;height:18px;background:#aca899"></div>
<div class="a btn def" style="left:857px;top:266px;width:18px;height:21px;"><div class="bl" style="color:#000;line-height:19px;line-height:16px">...</div></div>
<div class="a btn" style="left:857px;top:293px;width:18px;height:21px;"><div class="bl" style="color:#000;line-height:19px;line-height:16px">...</div></div>
<div class="a btn" style="left:857px;top:320px;width:18px;height:21px;"><div class="bl" style="color:#000;line-height:19px;line-height:16px">...</div></div>
<div class="a btn" style="left:857px;top:347px;width:18px;height:21px;"><div class="bl" style="color:#000;line-height:19px;line-height:16px">...</div></div>
<div class="a btn" style="left:658px;top:590px;width:75px;height:25px;"><div class="bl" style="color:#000;line-height:23px;">OK</div></div>
<div class="a btn" style="left:739px;top:590px;width:75px;height:25px;"><div class="bl" style="color:#000;line-height:23px;">Cancel</div></div>
<div class="a btn" style="left:820px;top:590px;width:75px;height:25px;"><div class="bl" style="color:#000;line-height:23px;"><span class="u">H</span>elp</div></div>
<div class="a " style="left:512px;top:235px;width:339px;height:342px;border-radius:8px 8px 0 0;background:linear-gradient(90deg,#0030c8 0,#0848f0 2px,#0038d8 4px,#0038d8 334px,#0028b8 338px)"></div>
<div class="a " style="left:512px;top:235px;width:339px;height:342px;border-radius:8px 8px 0 0;border:1px solid #0019a0;border-top-color:#3a7af8"></div>
<div class="a " style="left:513px;top:236px;width:337px;height:29px;border-radius:7px 7px 0 0;background:linear-gradient(180deg,#3d95ff 0,#0a6af8 3px,#0058ee 7px,#0054e3 13px,#005ff0 20px,#0068fc 24px,#0058e8 27px,#0046d0 29px)"></div>
<svg class="a" style="left:517px;top:242px;shape-rendering:auto" width="20" height="20" viewBox="0 0 20 20" shape-rendering="crispEdges"><rect x="4.5" y="3.5" width="10" height="12" fill="#5a70c8" stroke="#202a70"/><path d="M7 5v9" stroke="#2040b0" stroke-width="1.5"/><path d="M10.5 4v12" stroke="#f0b080" stroke-width="2"/><path d="M1.5 13.5 C5 15.5 9 14 12 10 S16 5 18 4.5" stroke="#a02040" stroke-width="1.6" fill="none"/><circle cx="17.5" cy="5" r="1.6" fill="#e04060"/></svg>
<div class="t ttl" style="left:537px;top:243px;color:#fff;text-shadow:1px 1px 0 #0a1a80">Directories</div>
<div class="a " style="left:824px;top:241px;width:21px;height:21px;border:1px solid #fff;border-radius:3px;background:radial-gradient(circle at 30% 25%,#f0a080 0,#e0603a 55%,#c8482a 100%)"></div>
<svg class="a" style="left:828px;top:245px;shape-rendering:auto" width="13" height="13" viewBox="0 0 13 13" shape-rendering="crispEdges"><path d="M2 2 L11 11 M11 2 L2 11" stroke="#fff" stroke-width="2.2"/></svg>
<div class="a " style="left:516px;top:265px;width:331px;height:308px;background:#ece9d8"></div>
<div class="a " style="left:524px;top:273px;width:312px;height:255px;border:1px solid #aca899;box-shadow:inset 1px 1px 0 #fff,1px 1px 0 #fff"></div>
<div class="t " style="left:534px;top:280px;">Ordered list of Library paths:</div>
<div class="a " style="left:534px;top:296px;width:254px;height:161px;background:#fff;border:1px solid;border-color:#716f64 #fff #fff #716f64;box-shadow:inset 1px 1px 0 #404040,inset -1px -1px 0 #ece9d8"></div>
<div class="a" style="left:536px;top:297px;width:235px;height:159px;overflow:hidden">
<div class="t" style="left:2px;top:0px">$(DELPHI)\Lib</div>
<div class="t" style="left:2px;top:13px">$(DELPHI)\Bin</div>
<div class="t" style="left:2px;top:26px">$(DELPHI)\Imports</div>
<div class="t" style="left:2px;top:39px">$(DELPHI)\Projects\Bpl</div>
<div class="a" style="left:0;top:52px;width:235px;height:13px;background:#316ac5;border:1px dotted #a0b8e0"></div>
<div class="t" style="left:2px;top:52px;color:#fff">C:\Arquivos de programas\Indy 9 for Delphi 5\Lib</div>
<div class="t" style="left:2px;top:65px">C:\Araraquara\COMPONENTE-JVCL\JCL\Source</div>
<div class="t" style="left:2px;top:78px">C:\Araraquara\COMPONENTE-JVCL\JVCL\Source</div>
<div class="t" style="left:2px;top:91px">C:\Araraquara\COMPONENTE-JVCL\JVCL\Common</div>
<div class="t" style="left:2px;top:104px">C:\Arquivos de programas\Borland\JCL\Source</div>
<div class="t" style="left:2px;top:117px">C:\Arquivos de programas\Borland\JVCL\Source</div>
<div class="t" style="left:2px;top:130px">C:\Arquivos de programas\Borland\JVCL\Common</div>
<div class="t" style="left:2px;top:143px">c:\numberedit</div>
<div class="t" style="left:2px;top:156px">$(DELPHI)\Source</div>
</div>
<div class="a " style="left:771px;top:297px;width:16px;height:159px;background:#fdfdfa;border-left:1px solid #eef0f8"></div>
<div class="a " style="left:771px;top:297px;width:16px;height:17px;border:1px solid #b8ccf0;border-radius:2px;background:linear-gradient(135deg,#dfe8fd,#bccffa)"></div>
<svg class="a" style="left:774px;top:302px;shape-rendering:auto" width="10" height="6" viewBox="0 0 10 6" shape-rendering="crispEdges"><path d="M1 5 L5 1 L9 5" stroke="#4d6185" stroke-width="2" fill="none"/></svg>
<div class="a " style="left:771px;top:314px;width:16px;height:114px;border:1px solid #b4c8f4;border-radius:2px;background:linear-gradient(90deg,#c8d8fb,#bcd0fa 60%,#b0c6f6)"></div>
<svg class="a" style="left:774px;top:369px;" width="10" height="7" viewBox="0 0 10 7" shape-rendering="crispEdges"><path d="M1 0.5h7M1 2.5h7M1 4.5h7M1 6.5h7" stroke="#8caaf0"/></svg>
<div class="a " style="left:771px;top:440px;width:16px;height:16px;border:1px solid #b8ccf0;border-radius:2px;background:linear-gradient(135deg,#dfe8fd,#bccffa)"></div>
<svg class="a" style="left:774px;top:445px;shape-rendering:auto" width="10" height="6" viewBox="0 0 10 6" shape-rendering="crispEdges"><path d="M1 1 L5 5 L9 1" stroke="#4d6185" stroke-width="2" fill="none"/></svg>
<div class="a btn" style="left:800px;top:346px;width:26px;height:25px;"><div class="bl" style="color:#000;line-height:23px;"></div></div>
<svg class="a" style="left:806px;top:352px;shape-rendering:auto" width="12" height="13" viewBox="0 0 12 13" shape-rendering="crispEdges"><path d="M6 1 L11 6 H8 V12 H4 V6 H1 Z" fill="#0000ff" stroke="#000080" stroke-width="0.6"/></svg>
<div class="a btn" style="left:800px;top:378px;width:26px;height:25px;"><div class="bl" style="color:#000;line-height:23px;"></div></div>
<svg class="a" style="left:806px;top:385px;shape-rendering:auto" width="12" height="13" viewBox="0 0 12 13" shape-rendering="crispEdges"><path d="M6 12 L11 7 H8 V1 H4 V7 H1 Z" fill="#0000ff" stroke="#000080" stroke-width="0.6"/></svg>
<div class="a " style="left:534px;top:465px;width:230px;height:20px;background:#fff;border:1px solid;border-color:#716f64 #fff #fff #716f64;box-shadow:inset 1px 1px 0 #404040"></div>
<div class="t " style="left:537px;top:468px;font-size:10.7px">C:\Arquivos de programas\Indy 9 for Delphi 5\L</div>
<div class="a btn" style="left:771px;top:465px;width:19px;height:21px;"><div class="bl" style="color:#000;line-height:19px;line-height:16px">...</div></div>
<div class="a btn" style="left:532px;top:497px;width:75px;height:25px;"><div class="bl" style="color:#aca899;text-shadow:1px 1px 0 #fff;line-height:23px;"><span class="u">R</span>eplace</div></div>
<div class="a btn" style="left:620px;top:497px;width:75px;height:25px;"><div class="bl" style="color:#aca899;text-shadow:1px 1px 0 #fff;line-height:23px;"><span class="u">A</span>dd</div></div>
<div class="a btn" style="left:708px;top:497px;width:75px;height:25px;"><div class="bl" style="color:#000;line-height:23px;"><span class="u">D</span>elete</div></div>
<div class="a btn def" style="left:602px;top:538px;width:75px;height:25px;"><div class="bl" style="color:#000;line-height:23px;">OK</div></div>
<div class="a btn" style="left:682px;top:538px;width:75px;height:25px;"><div class="bl" style="color:#000;line-height:23px;">Cancel</div></div>
<div class="a btn" style="left:762px;top:538px;width:75px;height:25px;"><div class="bl" style="color:#000;line-height:23px;"><span class="u">H</span>elp</div></div>
</body></html>
